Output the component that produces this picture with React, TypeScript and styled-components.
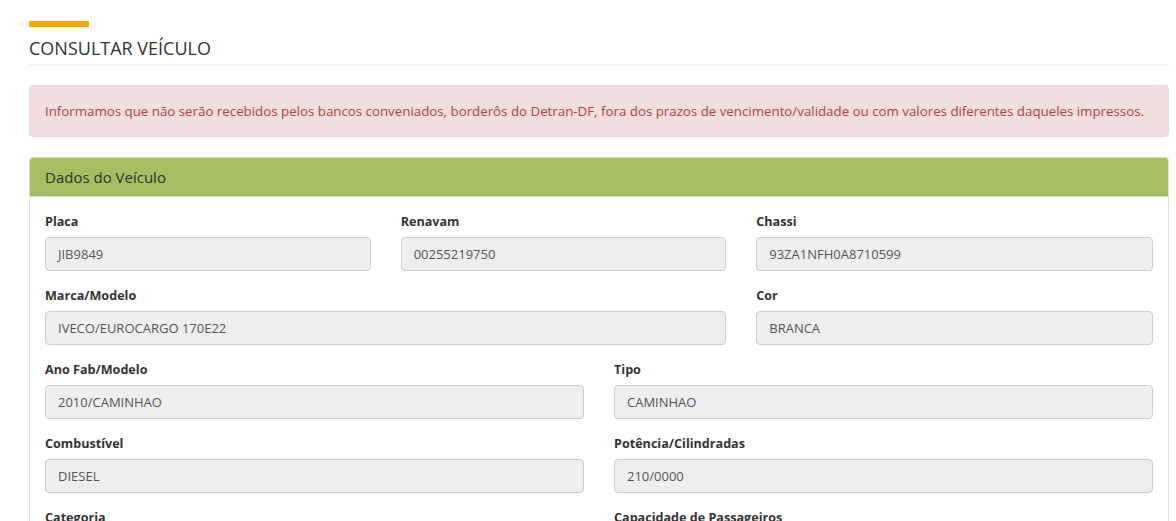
import React from "react";
import styled, { createGlobalStyle } from "styled-components";

interface IField {
  label: string;
  value: string;
  span: number;
}

const GlobalStyle = createGlobalStyle`
  html, body {
    margin: 0;
    padding: 0;
    background: #ffffff;
    font-family: "Open Sans", "DejaVu Sans", sans-serif;
    color: #333333;
  }
`;

const Page = styled.div`
  width: 1140px;
  padding: 21px 0 0 29px;
`;

const TitleBar = styled.div`
  width: 60px;
  height: 6px;
  background: #f5a800;
`;

const Title = styled.h1`
  margin: 0;
  padding: 9px 0 4px;
  font-size: 18px;
  font-weight: 400;
  color: #333333;
  border-bottom: 1px solid #eeeeee;
`;

const Alert = styled.div`
  margin-top: 20px;
  padding: 15px 15px 15px;
  background: #f2dede;
  border: 1px solid #ebd5d8;
  border-radius: 4px;
  color: #a94442;
  font-size: 13.3px;
  line-height: 20px;
`;

const Panel = styled.div`
  margin-top: 20px;
  border: 1px solid #dddddd;
  border-top-color: #d4e0c0;
  border-radius: 4px;
`;

const PanelHeading = styled.div`
  height: 38px;
  padding: 0 15px;
  display: flex;
  align-items: center;
  background: #a3bf60;
  border-bottom: 1px solid #d8e4c4;
  border-radius: 3px 3px 0 0;
  font-size: 15px;
  color: #333333;
`;

const PanelBody = styled.div`
  padding: 15px 15px 0;
`;

const Row = styled.div`
  display: flex;
  margin: 0 -15px;
`;

const Col = styled.div<{ span: number }>`
  box-sizing: border-box;
  flex: 0 0 ${({ span }) => span}%;
  padding: 0 15px 15px;
`;

const Label = styled.div`
  font-size: 12.6px;
  font-weight: 700;
  line-height: 20px;
  margin-bottom: 5px;
  color: #333333;
`;

const Input = styled.div`
  box-sizing: border-box;
  height: 34px;
  padding: 0 12px;
  display: flex;
  align-items: center;
  background: #eeeeee;
  border: 1px solid #cccccc;
  border-radius: 4px;
  font-size: 13px;
  color: #555555;
`;

const rows: IField[][] = [
  [
    { label: "Placa", value: "JIB9849", span: 31.25 },
    { label: "Renavam", value: "00255219750", span: 31.25 },
    { label: "Chassi", value: "93ZA1NFH0A8710599", span: 37.5 },
  ],
  [
    { label: "Marca/Modelo", value: "IVECO/EUROCARGO 170E22", span: 62.5 },
    { label: "Cor", value: "BRANCA", span: 37.5 },
  ],
  [
    { label: "Ano Fab/Modelo", value: "2010/CAMINHAO", span: 50 },
    { label: "Tipo", value: "CAMINHAO", span: 50 },
  ],
  [
    { label: "Combustível", value: "DIESEL", span: 50 },
    { label: "Potência/Cilindradas", value: "210/0000", span: 50 },
  ],
  [
    { label: "Categoria", value: "", span: 50 },
    { label: "Capacidade de Passageiros", value: "", span: 50 },
  ],
];

export default function App() {
  return (
    <>
      <GlobalStyle />
      <Page>
        <TitleBar />
        <Title>CONSULTAR VEÍCULO</Title>
        <Alert>
          Informamos que não serão recebidos pelos bancos conveniados, borderôs
          do Detran-DF, fora dos prazos de vencimento/validade ou com valores
          diferentes daqueles impressos.
        </Alert>
        <Panel>
          <PanelHeading>Dados do Veículo</PanelHeading>
          <PanelBody>
            {rows.map((row, i) => (
              <Row key={i}>
                {row.map((field) => (
                  <Col key={field.label} span={field.span}>
                    <Label>{field.label}</Label>
                    <Input>{field.value}</Input>
                  </Col>
                ))}
              </Row>
            ))}
          </PanelBody>
        </Panel>
      </Page>
    </>
  );
}
